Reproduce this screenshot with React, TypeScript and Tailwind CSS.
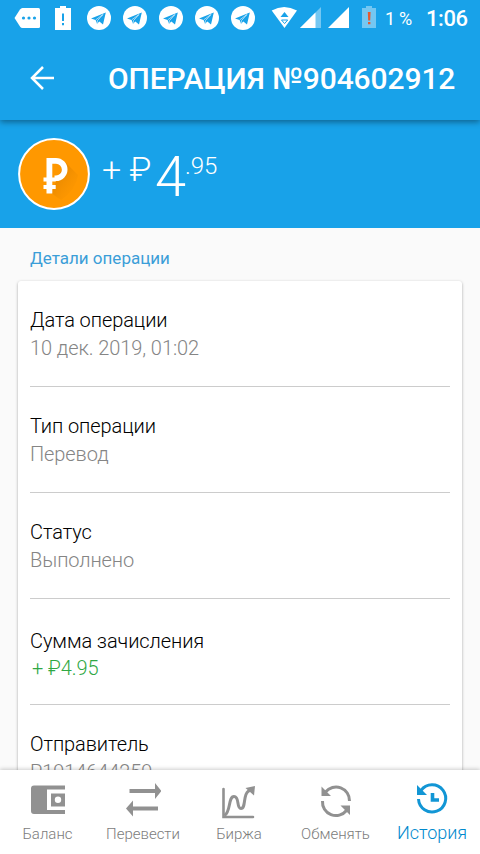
import React from "react";

function StatusBar() {
  return (
    <div className="flex h-9 shrink-0 items-center text-white">
      <svg width="380" height="36" viewBox="0 0 380 36" fill="#fff" className="shrink-0">
        <path d="M14.500 18 L20 9.500 Q21 8 22.500 8 H38.500 Q40 8 40 9.500 V26.500 Q40 28 38.500 28 H22.500 Q21 28 20 26.500 Z" />
        <g fill="#18a2e9">
          <circle cx="23.500" cy="18" r="1.600" />
          <circle cx="29" cy="18" r="1.600" />
          <circle cx="34.500" cy="18" r="1.600" />
        </g>
        <path d="M55 8 H60 V6 H66 V8 H71 V30 H55 Z" />
        <path d="M62 13.500 H64 V21 H62 Z M62 23 H64 V25.300 H62 Z" fill="#18a2e9" />
        {[99, 135, 171, 207, 243].map((cx) => (
          <g key={cx} transform={`translate(${cx} 18)`}>
            <circle r="12" />
            <path
              d="M-8 0.500 L6.800 -5.600 L4 6.500 L0.400 3.400 L-2 5.700 L-3.400 2 Z"
              fill="#18a2e9"
            />
            <path d="M-3.200 1.800 L4 -3.500 L-1.500 2.600 L-1.900 5" fill="none" stroke="#fff" strokeWidth="0.600" />
          </g>
        ))}
        <path d="M271.700 10.500 Q284 3.500 297 10.500 L284.500 28 Z" />
        <path d="M280.500 17 L284.500 12 L288.500 17 Z" fill="#18a2e9" />
        <path d="M281.500 20 H287.700 L284.600 23.600 Z" fill="none" stroke="#18a2e9" strokeWidth="1" />
        <path d="M300 28 L321 7 V28 Z" opacity="0.400" />
        <path d="M300 28 L315.500 12.500 V28 Z" />
        <path d="M328 28 L349 7 V28 Z" />
        <path d="M362 8 H366 V6 H372 V8 H376 V28 H362 Z" opacity="0.400" />
        <path d="M367.800 12 H370.600 L370.200 20.500 H368.200 Z M368 22 H370.400 V24.300 H368 Z" fill="#e35a32" />
      </svg>
      <span className="ml-[5px] w-[41px] whitespace-nowrap pt-[1px] text-[18px] leading-none tracking-[-0.3px]">1 %</span>
      <span className="whitespace-nowrap pt-[1px] text-[22px] font-medium leading-none tracking-[-0.4px]">1:06</span>
    </div>
  );
}

function Header() {
  return (
    <header className="z-10 h-[120px] shrink-0 bg-[#18a2e9] shadow-[0_2px_6px_rgba(0,0,0,0.4)]">
      <StatusBar />
      <div className="flex h-[84px] items-center">
        <svg width="26" height="26" viewBox="0 0 26 26" className="ml-[29px] shrink-0" fill="none" stroke="#fff" strokeWidth="2.500">
          <path d="M25 13 H3 M14 2 L3 13 L14 24" />
        </svg>
        <h1 className="ml-[53px] whitespace-nowrap pt-[2px] text-[30px] font-medium leading-none tracking-[-0.1px] text-white">
          ОПЕРАЦИЯ №904602912
        </h1>
      </div>
    </header>
  );
}

function Coin() {
  return (
    <svg width="72" height="72" viewBox="0 0 72 72" className="shrink-0">
      <defs>
        <linearGradient id="coinShade" x1="0" y1="0" x2="1" y2="1">
          <stop offset="0.300" stopColor="#d97f00" stopOpacity="0.600" />
          <stop offset="1" stopColor="#ff9800" stopOpacity="0" />
        </linearGradient>
      </defs>
      <circle cx="36" cy="36" r="34.900" fill="#ff9800" stroke="#fff" strokeWidth="2" />
      <path d="M47 24 L60 37 Q58 52 43 62 L33 55 Z" fill="url(#coinShade)" />
      <path
        d="M28.500 20 H38 A11.500 11.500 0 0 1 38 43 H36.500 V37.500 H38 A5.800 5.800 0 0 0 38 25.800 H34.300 V39.500 H37.700 V43.500 H34.300 V47 H37.700 V51 H34.300 V55.500 H28.500 V51 H25.500 V47 H28.500 V43.500 H25.500 V39.500 H28.500 Z"
        fill="#fff"
      />
    </svg>
  );
}

function Amount() {
  return (
    <section className="flex h-[108px] shrink-0 items-start bg-[#18a2e9] pl-[18px] pt-[18px] font-light text-white">
      <Coin />
      <div className="ml-[12px] flex items-start whitespace-nowrap leading-none">
        <span className="w-[53px] pt-[14px] text-[34px] leading-[34px]">+ ₽</span>
        <span className="w-[30px] pt-[10px] text-[56px] leading-[58px]">4</span>
        <span className="pt-[16px] text-[24px] leading-[25px]">.95</span>
      </div>
    </section>
  );
}

const details = [
  { title: "Дата операции", value: "10 дек. 2019, 01:02" },
  { title: "Тип операции", value: "Перевод" },
  { title: "Статус", value: "Выполнено" },
  { title: "Сумма зачисления", value: "+ ₽4.95", income: true },
  { title: "Отправитель", value: "P1914644259" },
];

function Details() {
  return (
    <main className="min-h-0 flex-1 overflow-hidden px-[18px]">
      <h2 className="h-[53px] pl-3 pt-[19px] text-[17px] leading-[22px] text-[#3b9ed8]">Детали операции</h2>
      <div className="h-[520px] rounded-[3px] bg-white px-3 shadow-[0_1px_3px_rgba(0,0,0,0.35)]">
        {details.map((row) => (
          <div
            key={row.title}
            className={`h-[106px] whitespace-nowrap border-b border-[#cccccc] text-[20px] font-light tracking-[-0.08px] ${row.income ? "pt-[28px]" : "pt-[25px]"}`}
          >
            <div className={row.income ? "leading-[28px] text-black" : "leading-[29px] text-black"}>{row.title}</div>
            <div className={row.income ? "pl-[2px] leading-[27px] text-[#2fa844]" : "leading-[27px] text-[#858585]"}>
              {row.value}
            </div>
          </div>
        ))}
      </div>
    </main>
  );
}

function WalletIcon() {
  return (
    <svg width="36" height="36" viewBox="0 0 36 36" fill="#919191">
      <path d="M4 2.500 H35 V6.500 H17 V27 H35 V31 H4 Q1 31 1 28 V5.500 Q1 2.500 4 2.500 Z" />
      <path fillRule="evenodd" d="M21 10.500 H35 V23.500 H21 Z M28 13.500 A3.200 3.200 0 1 0 28 19.900 A3.200 3.200 0 1 0 28 13.500 Z" />
    </svg>
  );
}

function TransferIcon() {
  return (
    <svg width="36" height="36" viewBox="0 0 36 36" fill="#919191">
      <path d="M4.500 6 H30 V0 L36.500 8 L30 16 V10 H4.500 Z M33 23.500 H8 V17.500 L1 25.500 L8 33.500 V27.500 H33 Z" />
    </svg>
  );
}

function ExchangeIcon() {
  return (
    <svg width="36" height="36" viewBox="0 0 36 36" fill="none" stroke="#919191" strokeWidth="2.600">
      <path d="M2.500 6 V34 H32" strokeLinecap="round" />
      <path d="M3.500 32.500 C10 29 7 13.500 13 13.500 C19 13.500 15 25.500 20 25.500 C25 25.500 22 12 27 8.500 L31 6" strokeWidth="3" />
      <path d="M24.500 5 L34 3 L33 12.500 Z" fill="#919191" stroke="none" />
    </svg>
  );
}

function ConvertIcon() {
  return (
    <svg width="36" height="36" viewBox="0 0 36 36" fill="none" stroke="#919191" strokeWidth="3">
      <path d="M7.500 9 A13.500 13.500 0 0 1 31.500 18 M4.500 18 A13.500 13.500 0 0 0 28.500 27.500" />
      <path d="M3.500 3.500 V13 H13 Z M32 32 V22.500 H22.500 Z" fill="#919191" stroke="none" />
    </svg>
  );
}

function HistoryIcon() {
  return (
    <svg width="36" height="36" viewBox="0 0 36 36" fill="none" stroke="#1296d5" strokeWidth="3">
      <path d="M7 9.500 A13.600 13.600 0 1 1 4.500 18" />
      <path d="M3 4 V14 H13 Z" fill="#1296d5" stroke="none" />
      <path d="M18.500 12 V19 H25" strokeWidth="3.600" />
    </svg>
  );
}

const tabs = [
  { label: "Баланс", icon: <WalletIcon /> },
  { label: "Перевести", icon: <TransferIcon /> },
  { label: "Биржа", icon: <ExchangeIcon /> },
  { label: "Обменять", icon: <ConvertIcon /> },
  { label: "История", icon: <HistoryIcon />, active: true },
];

function TabBar() {
  return (
    <nav className="z-10 grid h-[84px] shrink-0 grid-cols-[95px_96px_96px_97px_96px] bg-white shadow-[0_-1px_4px_rgba(0,0,0,0.2)]">
      {tabs.map((tab) => (
        <div
          key={tab.label}
          className={`flex flex-col items-center whitespace-nowrap font-light ${
            tab.active ? "pt-[11px] text-[18px] text-[#0089cd]" : "pt-[13px] text-[15px] text-[#7c7c7c]"
          }`}
        >
          {tab.icon}
          <span className={tab.active ? "mt-[5px] leading-[22px]" : "mt-[5px] leading-[20px]"}>{tab.label}</span>
        </div>
      ))}
    </nav>
  );
}

export default function App() {
  return (
    <div className="flex h-[854px] w-[480px] flex-col overflow-hidden bg-[#fafafa] font-['Roboto','Noto_Sans',sans-serif]">
      <Header />
      <Amount />
      <Details />
      <TabBar />
    </div>
  );
}
